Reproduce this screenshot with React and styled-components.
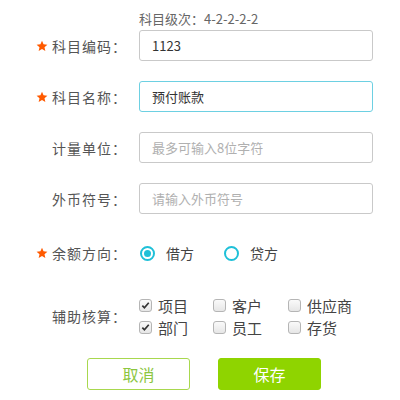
import styled, { createGlobalStyle } from 'styled-components';

const Global = createGlobalStyle`
  body {
    margin: 0;
    background: #fff;
    font-family: "Noto Sans CJK SC", "Noto Sans", sans-serif;
  }
`;

const Form = styled.div`
  width: 400px;
  height: 400px;
  box-sizing: border-box;
`;

const Hint = styled.div`
  height: 30px;
  box-sizing: border-box;
  padding: 11px 0 0 139px;
  font-size: 13px;
  line-height: 16px;
  color: #666;
`;

const Row = styled.div`
  display: flex;
  align-items: center;
  margin-top: ${(p) => p.$mt || 0}px;
`;

const Label = styled.div`
  width: 127px;
  flex-shrink: 0;
  display: flex;
  align-items: center;
  justify-content: flex-end;
  font-size: 14px;
  letter-spacing: 1px;
  color: #555;
  margin-right: 12px;
  line-height: 20px;
`;

const Star = styled.svg`
  width: 12px;
  height: 12px;
  margin-right: 4px;
`;

const Input = styled.input`
  width: 234px;
  height: 31px;
  box-sizing: border-box;
  border: 1px solid ${(p) => (p.$focus ? '#6dd0e2' : '#c9c9c9')};
  border-radius: 3px;
  padding: 0 12px;
  font-family: inherit;
  font-size: 13px;
  color: #333;
  outline: none;
  &::placeholder {
    color: #b0b0b0;
  }
`;

const Radios = styled.div`
  display: flex;
  align-items: center;
  height: 24px;
`;

const Radio = styled.span`
  width: 15px;
  height: 15px;
  box-sizing: border-box;
  border: 2px solid #1fc0d8;
  border-radius: 50%;
  display: flex;
  align-items: center;
  justify-content: center;
  margin: 0 11px 0 1px;
  &::after {
    content: '';
    width: 7px;
    height: 7px;
    border-radius: 50%;
    background: ${(p) => (p.$on ? '#1fc0d8' : 'transparent')};
  }
`;

const Option = styled.span`
  font-size: 14px;
  color: #444;
  margin-right: 29px;
`;

const Checks = styled.div`
  display: grid;
  grid-template-columns: 74px 75px auto;
  grid-auto-rows: 22px;
`;

const Check = styled.label`
  display: flex;
  align-items: center;
  font-size: 15px;
  color: #444;
`;

const Box = styled.span`
  width: 13px;
  height: 13px;
  box-sizing: border-box;
  border: 1px solid #b5b5b5;
  border-radius: 3px;
  background: linear-gradient(#fafafa, #e6e6e6);
  margin-right: 6px;
  display: flex;
  align-items: center;
  justify-content: center;
`;

const Buttons = styled.div`
  display: flex;
  gap: 28px;
  padding-left: 87px;
  margin-top: 20px;
`;

const Button = styled.button`
  width: 103px;
  height: 32px;
  box-sizing: border-box;
  border-radius: 3px;
  border: 1px solid ${(p) => (p.$primary ? '#8fd400' : '#a8d84e')};
  background: ${(p) => (p.$primary ? '#8fd400' : '#fff')};
  color: ${(p) => (p.$primary ? '#fff' : '#8cc63f')};
  font-family: inherit;
  font-size: 16px;
  padding: 0;
`;

const StarIcon = () => (
  <Star viewBox="0 0 24 24">
    <path
      fill="#ff5a00"
      d="M12 1.5l3.1 7.1 7.7.7-5.8 5.1 1.7 7.6L12 18l-6.7 4 1.7-7.6-5.8-5.1 7.7-.7z"
    />
  </Star>
);

const CheckBox = ({ on, children }) => (
  <Check>
    <Box>
      {on && (
        <svg width="9" height="9" viewBox="0 0 10 10">
          <path d="M1.5 5.2l2.3 2.4L8.6 2" fill="none" stroke="#333" strokeWidth="1.9" />
        </svg>
      )}
    </Box>
    {children}
  </Check>
);

export default function App() {
  return (
    <Form>
      <Global />
      <Hint>科目级次：4-2-2-2-2</Hint>
      <Row>
        <Label>
          <StarIcon />
          科目编码：
        </Label>
        <Input defaultValue="1123" />
      </Row>
      <Row $mt={20}>
        <Label>
          <StarIcon />
          科目名称：
        </Label>
        <Input $focus defaultValue="预付账款" />
      </Row>
      <Row $mt={20}>
        <Label>计量单位：</Label>
        <Input placeholder="最多可输入8位字符" />
      </Row>
      <Row $mt={20}>
        <Label>外币符号：</Label>
        <Input placeholder="请输入外币符号" />
      </Row>
      <Row $mt={27}>
        <Label>
          <StarIcon />
          余额方向：
        </Label>
        <Radios>
          <Radio $on />
          <Option>借方</Option>
          <Radio />
          <Option>贷方</Option>
        </Radios>
      </Row>
      <Row $mt={29}>
        <Label>辅助核算：</Label>
        <Checks>
          <CheckBox on>项目</CheckBox>
          <CheckBox>客户</CheckBox>
          <CheckBox>供应商</CheckBox>
          <CheckBox on>部门</CheckBox>
          <CheckBox>员工</CheckBox>
          <CheckBox>存货</CheckBox>
        </Checks>
      </Row>
      <Buttons>
        <Button>取消</Button>
        <Button $primary>保存</Button>
      </Buttons>
    </Form>
  );
}
